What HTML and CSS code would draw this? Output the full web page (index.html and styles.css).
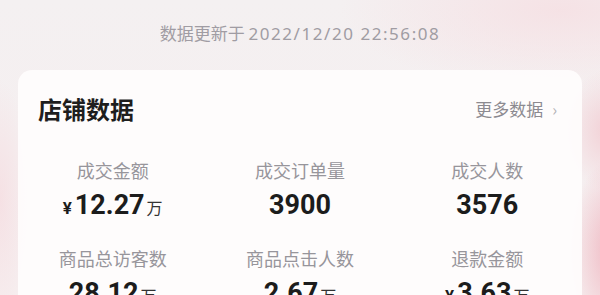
FILE: index.html
```html
<!DOCTYPE html>
<html lang="zh-CN">
<head>
<meta charset="utf-8">
<link rel="stylesheet" href="styles.css">
</head>
<body>
<div class="page">
  <div class="updated">数据更新于 <span class="ts">2022/12/20 22:56:08</span></div>
  <section class="card">
    <div class="card-head">
      <h2 class="title">店铺数据</h2>
      <a class="more">更多数据<span class="chev">›</span></a>
    </div>
    <div class="grid">
      <div class="stat">
        <div class="label">成交金额</div>
        <div class="value"><span class="cur">¥</span>12.27<span class="unit">万</span></div>
      </div>
      <div class="stat">
        <div class="label">成交订单量</div>
        <div class="value">3900</div>
      </div>
      <div class="stat">
        <div class="label">成交人数</div>
        <div class="value">3576</div>
      </div>
      <div class="stat">
        <div class="label">商品总访客数</div>
        <div class="value">28.12<span class="unit">万</span></div>
      </div>
      <div class="stat">
        <div class="label">商品点击人数</div>
        <div class="value">2.67<span class="unit">万</span></div>
      </div>
      <div class="stat">
        <div class="label">退款金额</div>
        <div class="value"><span class="cur">¥</span>3.63<span class="unit">万</span></div>
      </div>
    </div>
  </section>
</div>
</body>
</html>
```

FILE: styles.css
```css
html, body {
  margin: 0;
  padding: 0;
}
body {
  width: 600px;
  height: 295px;
  overflow: hidden;
  font-family: "Noto Sans CJK SC", "Noto Sans", sans-serif;
  background:
    radial-gradient(ellipse 40px 90px at 610px 250px, rgba(238, 170, 182, 0.75), rgba(238, 170, 182, 0) 100%),
    radial-gradient(ellipse 40px 60px at 605px 130px, rgba(240, 190, 198, 0.6), rgba(240, 190, 198, 0) 100%),
    radial-gradient(ellipse 30px 120px at 0px 200px, rgba(245, 215, 220, 0.6), rgba(245, 215, 220, 0) 100%),
    radial-gradient(ellipse 220px 80px at 560px 10px, rgba(246, 220, 224, 0.7), rgba(246, 220, 224, 0) 100%),
    linear-gradient(180deg, #f4f0f1 0%, #f6eeef 100%);
}
.page {
  display: flex;
  flex-direction: column;
}
.updated {
  padding-top: 23px;
  height: 70px;
  box-sizing: border-box;
  text-align: center;
  font-size: 17px;
  line-height: 20px;
  color: #a09ca3;
}
.ts {
  font-family: "Noto Sans", sans-serif;
  letter-spacing: 1.55px;
}
.card {
  margin: 0 18px;
  background: rgba(255, 253, 253, 0.9);
  border-radius: 14px;
  height: 260px;
}
.card-head {
  display: flex;
  justify-content: space-between;
  align-items: center;
  padding: 26px 25px 0 20px;
  height: 26px;
}
.title {
  margin: 0;
  font-size: 24px;
  line-height: 26px;
  font-weight: 700;
  color: #1e1e1e;
}
.more {
  font-size: 17px;
  line-height: 22px;
  color: #8c8a90;
  display: flex;
  align-items: center;
}
.chev {
  margin-left: 9px;
  font-size: 16px;
  color: #b4b2b6;
}
.grid {
  display: grid;
  grid-template-columns: repeat(3, 1fr);
  row-gap: 27px;
  margin-top: 37px;
  padding: 0 1px 0 1px;
}
.stat {
  display: flex;
  flex-direction: column;
  align-items: center;
  gap: 9px;
}
.label {
  font-size: 18px;
  line-height: 22px;
  height: 22px;
  color: #97959b;
}
.value {
  font-family: Roboto, "Liberation Sans", sans-serif;
  font-weight: 700;
  font-size: 27px;
  line-height: 30px;
  height: 30px;
  color: #1c1c1c;
  display: flex;
  align-items: baseline;
}
.cur {
  font-size: 17px;
  line-height: 1;
  margin-right: 3px;
}
.unit {
  font-family: "Noto Sans CJK SC", sans-serif;
  font-weight: 400;
  font-size: 16px;
  line-height: 1;
  color: #333;
  margin-left: 2px;
}
```
